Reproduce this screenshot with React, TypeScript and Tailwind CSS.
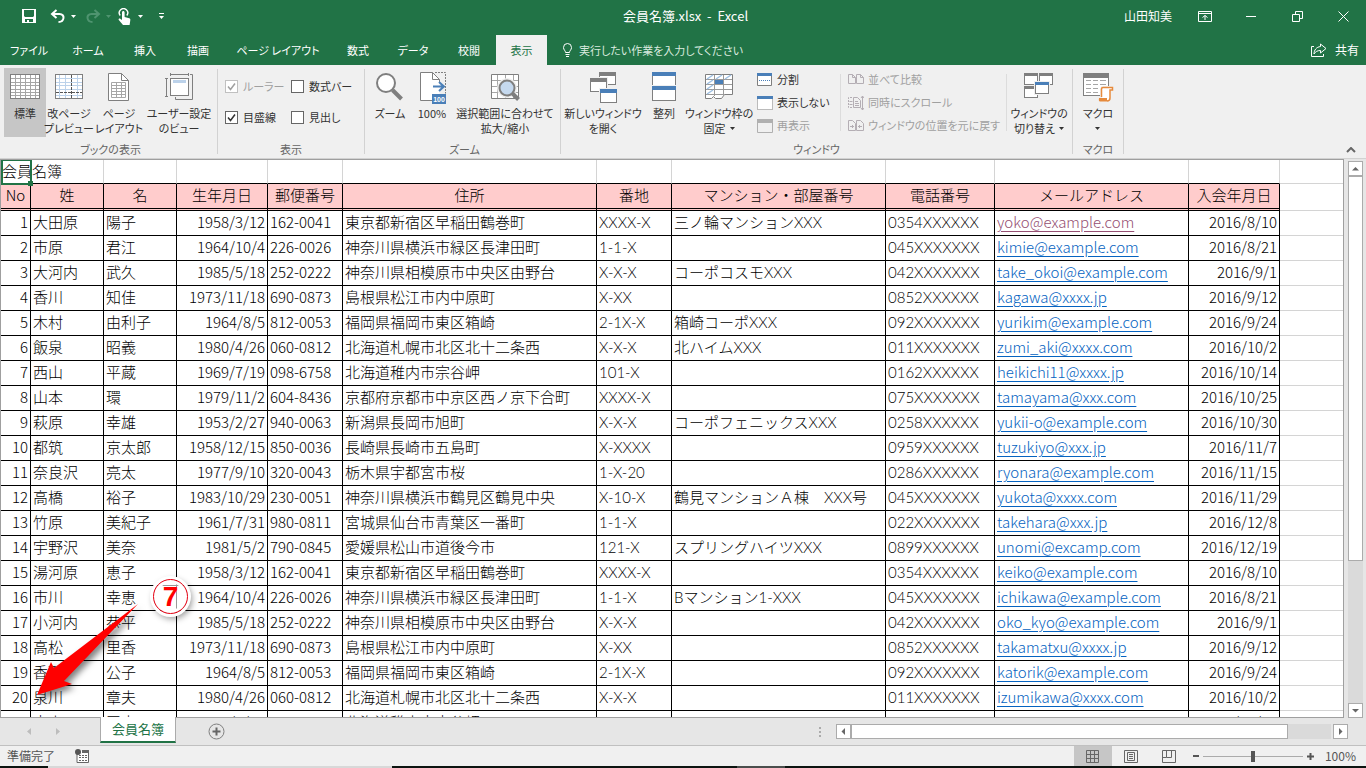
import React, { useState } from 'react';

type Member = [string, string, string, string, string, string, string, string, string, string];

const headers = ['No', '姓', '名', '生年月日', '郵便番号', '住所', '番地', 'マンション・部屋番号', '電話番号', 'メールアドレス', '入会年月日'];

const members: Member[] = [
  ['大田原', '陽子', '1958/3/12', '162-0041', '東京都新宿区早稲田鶴巻町', 'XXXX-X', '三ノ輪マンションXXX', '0354XXXXXX', 'yoko@example.com', '2016/8/10'],
  ['市原', '君江', '1964/10/4', '226-0026', '神奈川県横浜市緑区長津田町', '1-1-X', '', '045XXXXXXX', 'kimie@example.com', '2016/8/21'],
  ['大河内', '武久', '1985/5/18', '252-0222', '神奈川県相模原市中央区由野台', 'X-X-X', 'コーポコスモXXX', '042XXXXXXX', 'take_okoi@example.com', '2016/9/1'],
  ['香川', '知佳', '1973/11/18', '690-0873', '島根県松江市内中原町', 'X-XX', '', '0852XXXXXX', 'kagawa@xxxx.jp', '2016/9/12'],
  ['木村', '由利子', '1964/8/5', '812-0053', '福岡県福岡市東区箱崎', '2-1X-X', '箱崎コーポXXX', '092XXXXXXX', 'yurikim@example.com', '2016/9/24'],
  ['飯泉', '昭義', '1980/4/26', '060-0812', '北海道札幌市北区北十二条西', 'X-X-X', '北ハイムXXX', '011XXXXXXX', 'zumi_aki@xxxx.com', '2016/10/2'],
  ['西山', '平蔵', '1969/7/19', '098-6758', '北海道稚内市宗谷岬', '101-X', '', '0162XXXXXX', 'heikichi11@xxxx.jp', '2016/10/14'],
  ['山本', '環', '1979/11/2', '604-8436', '京都府京都市中京区西ノ京下合町', 'XXXX-X', '', '075XXXXXXX', 'tamayama@xxx.com', '2016/10/25'],
  ['萩原', '幸雄', '1953/2/27', '940-0063', '新潟県長岡市旭町', 'X-X-X', 'コーポフェニックスXXX', '0258XXXXXX', 'yukii-o@example.com', '2016/10/30'],
  ['都筑', '京太郎', '1958/12/15', '850-0036', '長崎県長崎市五島町', 'X-XXXX', '', '0959XXXXXX', 'tuzukiyo@xxx.jp', '2016/11/7'],
  ['奈良沢', '亮太', '1977/9/10', '320-0043', '栃木県宇都宮市桜', '1-X-20', '', '0286XXXXXX', 'ryonara@example.com', '2016/11/15'],
  ['高橋', '裕子', '1983/10/29', '230-0051', '神奈川県横浜市鶴見区鶴見中央', 'X-10-X', '鶴見マンションＡ棟　XXX号', '045XXXXXXX', 'yukota@xxxx.com', '2016/11/29'],
  ['竹原', '美紀子', '1961/7/31', '980-0811', '宮城県仙台市青葉区一番町', '1-1-X', '', '022XXXXXXX', 'takehara@xxx.jp', '2016/12/8'],
  ['宇野沢', '美奈', '1981/5/2', '790-0845', '愛媛県松山市道後今市', '121-X', 'スプリングハイツXXX', '0899XXXXXX', 'unomi@excamp.com', '2016/12/19'],
  ['湯河原', '恵子', '1958/3/12', '162-0041', '東京都新宿区早稲田鶴巻町', 'XXXX-X', '', '0354XXXXXX', 'keiko@example.com', '2016/8/10'],
  ['市川', '幸恵', '1964/10/4', '226-0026', '神奈川県横浜市緑区長津田町', '1-1-X', 'Bマンション1-XXX', '045XXXXXXX', 'ichikawa@example.com', '2016/8/21'],
  ['小河内', '恭平', '1985/5/18', '252-0222', '神奈川県相模原市中央区由野台', 'X-X-X', '', '042XXXXXXX', 'oko_kyo@example.com', '2016/9/1'],
  ['高松', '里香', '1973/11/18', '690-0873', '島根県松江市内中原町', 'X-XX', '', '0852XXXXXX', 'takamatxu@xxxx.jp', '2016/9/12'],
  ['香取', '公子', '1964/8/5', '812-0053', '福岡県福岡市東区箱崎', '2-1X-X', '', '092XXXXXXX', 'katorik@example.com', '2016/9/24'],
  ['泉川', '章夫', '1980/4/26', '060-0812', '北海道札幌市北区北十二条西', 'X-X-X', '', '011XXXXXXX', 'izumikawa@xxxx.com', '2016/10/2'],
  ['東山', '平太', '1969/7/19', '', '北海道稚内市宗谷岬', '', '', '', '', '2016/10/14'],
];

const tabs = [
  { name: 'ファイル', width: 'w-[58px]' },
  { name: 'ホーム', width: 'w-[60px]' },
  { name: '挿入', width: 'w-[54px]' },
  { name: '描画', width: 'w-[52px]' },
  { name: 'ページ レイアウト', width: 'w-[108px]' },
  { name: '数式', width: 'w-[52px]' },
  { name: 'データ', width: 'w-[58px]' },
  { name: '校閲', width: 'w-[54px]' },
  { name: '表示', width: 'w-[51px]' },
];

const GRAY = '#7f7f7f';
const BLUE = '#4a7fb8';

/* ---------- Small glyphs ---------- */

const Caret = ({ className = '' }: { className?: string }) => (
  <svg width="5" height="3" viewBox="0 0 5 3" className={className} aria-hidden="true">
    <path d="M0 0h5L2.5 3z" fill="currentColor" />
  </svg>
);

const Triangle = ({ d }: { d: string }) => (
  <svg width="9" height="9" viewBox="0 0 9 9" aria-hidden="true">
    <path d={d} fill="currentColor" />
  </svg>
);

const SaveIcon = () => (
  <svg width="14" height="14" viewBox="0 0 14 14" aria-hidden="true">
    <path fill="#fff" fillRule="evenodd" d="M0 0h14v14H0zM2 1v6l1 1h8l1-1V1zM3 10v3h2v-2h2v2h4v-3z" />
  </svg>
);

const UndoIcon = () => (
  <svg width="16" height="14" viewBox="0 0 16 14" fill="none" stroke="currentColor" strokeWidth="2" aria-hidden="true">
    <path d="M6.5 1 2 5l4.5 4M2 5h7.5c6 0 5 8-1 8" />
  </svg>
);

const TouchIcon = () => (
  <svg width="13" height="17" viewBox="0 0 13 17" aria-hidden="true">
    <path d="M2.2 7.5a4.2 4.2 0 1 1 6.6 0" fill="none" stroke="#fff" strokeWidth="1.4" />
    <path fill="#fff" d="M4 4.5c0-2 2.6-2 2.6 0V9l4.6 1.2c1 .3 1.3 1 1.1 2L11.6 17H5L.8 12c-.8-1.2.8-2 1.7-1.1L4 12z" />
  </svg>
);

/* ---------- Ribbon icons, 32x32 ---------- */

const Icon32 = ({ children }: { children: React.ReactNode }) => (
  <svg width="32" height="32" viewBox="0 0 32 32" fill="none" className="shrink-0" aria-hidden="true">
    {children}
  </svg>
);

const NormalViewIcon = () => (
  <Icon32>
    <rect x="1.5" y="2.5" width="29" height="24" fill="#fff" stroke={GRAY} />
    <path d="M6.5 3v23M11.5 3v23M16.5 3v23M21.5 3v23M26.5 3v23M2 6.5h28M2 10.5h28M2 13.5h28M2 17.5h28M2 20.5h28M2 23.5h28" stroke="#a6a6a6" />
  </Icon32>
);

const PageBreakIcon = () => (
  <Icon32>
    <rect x="2.5" y="2.5" width="27" height="24" fill="#fff" stroke={GRAY} />
    <path d="M6.5 3v23M12.5 3v23M24.5 3v23M3 6.5h26M3 10.5h26M3 13.5h26M3 17.5h26M3 23.5h26" stroke="#bcd2ea" />
    <path d="M18.5 3v23M3 20.5h26" stroke="#555" strokeDasharray="3 1" />
  </Icon32>
);

const PageLayoutIcon = () => (
  <Icon32>
    <path d="M5.5 1.5h13l7 7v20h-20z" fill="#fff" stroke={GRAY} />
    <path d="M18.5 1.5v7h7" stroke={GRAY} />
    <path d="M8.5 10.5h14v15h-14zM8.5 13.5h14M8.5 16.5h14M8.5 19.5h14M8.5 22.5h14M13.5 10.5v15M18.5 10.5v15" stroke="#a6a6a6" />
  </Icon32>
);

const CustomViewIcon = () => (
  <Icon32>
    <path d="M27 2.5h2.5v25h-17V25" stroke={GRAY} />
    <path d="M7.5 2.5h18M7.5 1v3M25.5 1v3M3.5 6.5v18M2 6.5h3M2 24.5h3" stroke={GRAY} />
    <rect x="7.5" y="6.5" width="18" height="17" fill="#fff" stroke={GRAY} />
    <path d="M10 8h13v3H10z" fill="#bcd2ea" />
  </Icon32>
);

const ZoomIcon = () => (
  <Icon32>
    <circle cx="12" cy="11" r="9" fill="#fff" stroke={GRAY} strokeWidth="2" />
    <path d="m18.5 18 9 9" stroke={GRAY} strokeWidth="4" />
  </Icon32>
);

const Zoom100Icon = () => (
  <Icon32>
    <path d="M4.5.5h12l7 7v21h-19z" fill="#fff" />
    <path d="M16 28.5H4.5V.5h12l7 7v3M16.5.5v7h7" stroke={GRAY} />
    <path d="M19 .5h10.5v21" stroke={GRAY} strokeDasharray="2 1" />
    <path d="M17 14.5h10M23 10l5 4.5-5 4.5" stroke={BLUE} strokeWidth="2" />
    <path d="M16 22h14v10H16z" fill={BLUE} />
    <text x="23" y="30" textAnchor="middle" fontSize="7" fontWeight="700" fill="#fff" fontFamily="Liberation Sans, sans-serif">100</text>
  </Icon32>
);

const ZoomSelectionIcon = () => (
  <Icon32>
    <path d="M2.5 2.5h27v24h-27z" fill="#fff" stroke={GRAY} />
    <path d="M8.5 3v23M16.5 3v23M24.5 3v23M3 8.5h26M3 14.5h26M3 20.5h26" stroke="#a6a6a6" />
    <circle cx="18" cy="16" r="8" fill="#c5d9ef" stroke="#f0f0f0" strokeWidth="4" />
    <circle cx="18" cy="16" r="7.5" fill="#c5d9ef" stroke={GRAY} strokeWidth="2" />
    <path d="m23.5 21.5 6 6" stroke={GRAY} strokeWidth="4" />
  </Icon32>
);

interface WinProps { x: number; y: number; w: number; h: number; bar: number; color?: string }

// Miniature window used by several ribbon icons
const Win = ({ x, y, w, h, bar, color = GRAY }: WinProps) => (
  <g shapeRendering="crispEdges">
    <rect x={x - 1} y={y - 1} width={w + 2} height={h + 2} fill="#f0f0f0" />
    <rect x={x} y={y} width={w} height={h} fill={GRAY} />
    <rect x={x + 1} y={y + bar} width={w - 2} height={h - bar - 1} fill="#fff" />
    <rect x={x} y={y} width={w} height={bar} fill={color} />
  </g>
);

const NewWindowIcon = () => (
  <Icon32>
    <Win x={12} y={0} w={17} h={13} bar={4} />
    <Win x={3} y={6} w={17} h={14} bar={4} />
    <Win x={13} y={17} w={17} h={14} bar={4} color={BLUE} />
  </Icon32>
);

const ArrangeIcon = () => (
  <Icon32>
    <Win x={4} y={0} w={24} h={15} bar={4} color={BLUE} />
    <Win x={4} y={14} w={24} h={15} bar={4} color={BLUE} />
  </Icon32>
);

const FreezeIcon = () => (
  <Icon32>
    <path d="M2.5 2.5h27v20h-8l-3 4h-6l-2-2-2 2h-6z" fill="#fff" stroke={GRAY} />
    <path d="M11.5 3v21M20.5 3v20M3 7.5h26M3 12.5h26M3 17.5h26M3 22.5h18" stroke="#9a9a9a" />
    <path d="m4 7 6-4M13 7l6-4M22 7l6-4M4 12l6-4M4 17l6-4M4 22l6-4" stroke="#9dbfe2" strokeWidth="1.5" />
    <path d="M12 8h8v4h-8z" fill={BLUE} />
  </Icon32>
);

const SwitchWindowIcon = () => (
  <Icon32>
    <Win x={1} y={1} w={14} h={12} bar={3} />
    <Win x={16} y={1} w={14} h={12} bar={3} />
    <Win x={1} y={14} w={14} h={12} bar={3} />
    <Win x={12} y={10} w={14} h={12} bar={3} color={BLUE} />
  </Icon32>
);

const MacroIcon = () => (
  <Icon32>
    <Win x={1} y={1} w={26} h={23} bar={5} />
    <path d="M4 8.5h5M11 8.5h5M18 8.5h6M4 12.5h5M11 12.5h5M18 12.5h6M4 16.5h5M11 16.5h5M4 20.5h5M11 20.5h5" stroke="#a6a6a6" />
    <path d="M20 15h11v4h-2v9c0 2-1 2-3 2h-9v-4h2V17z" fill="#fff" stroke="#f0f0f0" strokeWidth="2" />
    <path d="M19.5 25V17c0-1 .5-1.5 1.5-1.5h9.5V18H28v8c0 2-1 3-3 3" stroke="#e68a3c" strokeWidth="1.5" />
    <path d="M17 26h8v3.5h-7c-1 0-1.5-1-1-3.5z" fill="#e68a3c" />
  </Icon32>
);

/* ---------- Small ribbon icons, 16x14 ---------- */

const SplitIcon = () => (
  <svg width="16" height="14" viewBox="0 0 16 14" aria-hidden="true">
    <path d="M.5.5h14v12H.5z" fill="#fff" stroke={GRAY} />
    <path d="M0 0h15v3H0z" fill={BLUE} />
    <path d="M2 7.5h12" stroke={BLUE} strokeDasharray="1 1" />
  </svg>
);

const HideIcon = () => (
  <svg width="16" height="14" viewBox="0 0 16 14" aria-hidden="true">
    <path d="M.5.5h15v13H.5z" fill="#fff" stroke={GRAY} strokeDasharray="1 1" />
    <path d="M0 0h16v3H0z" fill={BLUE} />
  </svg>
);

const UnhideIcon = () => (
  <svg width="16" height="14" viewBox="0 0 16 14" aria-hidden="true">
    <path d="M.5.5h15v13H.5z" fill="#f0f0f0" stroke="#b0b0b0" />
    <path d="M0 0h16v4H0z" fill="#b0b0b0" />
  </svg>
);

const SideBySideIcon = () => (
  <svg width="16" height="14" viewBox="0 0 16 14" fill="none" stroke="#b4aeb4" aria-hidden="true">
    <path d="M.5 1.5h4l3 3v6h-7zM4.5 1.5v3h3M8.5 1.5h4l3 3v6h-7zM12.5 1.5v3h3" />
  </svg>
);

const SyncScrollIcon = () => (
  <svg width="16" height="16" viewBox="0 0 16 16" fill="none" stroke="#b4aeb4" aria-hidden="true">
    <path d="M4 2.5H.5v10H4" strokeDasharray="2 1" />
    <path d="M5.5 2.5h4l3 3v7h-7zM7 6.5h3M7 8.5h4M7 10.5h4M1.5 6.5h3M1.5 9.5h3M14.5 1v14M13 3l1.5-2L16 3M13 13l1.5 2 1.5-2" />
  </svg>
);

const ResetPosIcon = () => (
  <svg width="16" height="14" viewBox="0 0 16 14" fill="none" stroke="#b4aeb4" aria-hidden="true">
    <path d="M.5 1.5h4l3 3v7h-7zM8.5 1.5h4l3 3v7h-7zM2 7.5h4M4.5 6v3M10 7.5h4M11.5 6v3" />
  </svg>
);

/* ---------- Ribbon parts ---------- */

interface BigButtonProps {
  icon: React.ReactNode;
  lines: string[];
  width: string;
  active?: boolean;
  menu?: boolean;
}

const BigButton = ({ icon, lines, width, active, menu }: BigButtonProps) => (
  <button className={`flex h-[69px] flex-col items-center pt-1 ${width} ${active ? 'bg-[#c6c6c6]' : 'hover:bg-[#dcdcdc]'}`}>
    {icon}
    <span className="mt-[2px] flex flex-col items-center text-[11px] leading-[15px] whitespace-nowrap">
      {lines.map((line, i) => (
        <span key={line} className="flex items-center gap-1">
          {line}
          {menu && lines.length > 1 && i === lines.length - 1 && <Caret />}
        </span>
      ))}
      {menu && lines.length === 1 && <Caret className="mt-[6px]" />}
    </span>
  </button>
);

const SmallButton = ({ icon, label, disabled }: { icon: React.ReactNode; label: string; disabled?: boolean }) => (
  <button disabled={disabled} className="flex h-[23px] items-center gap-1 whitespace-nowrap text-[11px] disabled:text-[#a0a0a0]">
    <span className="flex w-4 justify-center">{icon}</span>
    {label}
  </button>
);

const Group = ({ label, className = '', children }: { label: string; className?: string; children: React.ReactNode }) => (
  <section className={`my-1 flex h-[85px] flex-col border-r border-[#d2d2d2] ${className}`}>
    <div className="-mt-px flex h-[69px] shrink-0">{children}</div>
    <div className="mt-1 shrink-0 text-center text-[11px] leading-[16px] text-[#666]">{label}</div>
  </section>
);

const CheckItem = ({ label, checked, disabled }: { label: string; checked?: boolean; disabled?: boolean }) => (
  <label className={`relative flex items-center gap-[5px] whitespace-nowrap text-[11px] ${disabled ? 'text-[#a0a0a0]' : ''}`}>
    <input
      type="checkbox"
      defaultChecked={checked}
      disabled={disabled}
      className="peer size-[13px] appearance-none border border-[#666] bg-white disabled:border-[#c0c0c0]"
    />
    <svg width="9" height="9" viewBox="0 0 9 9" className="absolute left-[2px] hidden peer-checked:block" aria-hidden="true">
      <path d="m1 4.5 2.5 3L8 1.5" fill="none" stroke="currentColor" strokeWidth="1.5" />
    </svg>
    {label}
  </label>
);

const TitleBar = () => (
  <div className="flex h-8 items-center text-[12px]">
    <div className="flex flex-1 items-center pl-[22px]">
      <button aria-label="上書き保存"><SaveIcon /></button>
      <button aria-label="元に戻す" className="ml-[14px] flex items-center gap-[5px]"><UndoIcon /><Caret /></button>
      <button aria-label="やり直し" disabled className="ml-[9px] flex items-center gap-[5px] text-[#4f9470]">
        <span className="-scale-x-100"><UndoIcon /></span><Caret />
      </button>
      <button aria-label="タッチ/マウス モードの切り替え" className="ml-[7px] flex items-center gap-[7px]"><TouchIcon /><Caret /></button>
      <button aria-label="クイック アクセス ツール バーのユーザー設定" className="ml-4 flex flex-col items-center gap-[2px]">
        <span className="h-px w-[5px] bg-white" /><Caret />
      </button>
    </div>
    <h1 className="text-[13px] leading-[18px] whitespace-pre">会員名簿.xlsx  -  Excel</h1>
    <div className="flex flex-1 items-center justify-end pr-[17px]">
      <span>山田知美</span>
      <button aria-label="リボンの表示オプション" className="ml-[26px]">
        <svg width="14" height="11" viewBox="0 0 14 11" fill="none" stroke="#fff" aria-hidden="true">
          <path d="M.5.5h13v10H.5zM.5 2.5h13M7 9V4.5M4.5 6.5 7 4.5l2.5 2" />
        </svg>
      </button>
      <button aria-label="最小化" className="ml-[34px]">
        <svg width="11" height="11" viewBox="0 0 11 11" aria-hidden="true"><path d="M0 5.5h10" stroke="#fff" /></svg>
      </button>
      <button aria-label="元に戻す (縮小)" className="ml-[35px]">
        <svg width="11" height="11" viewBox="0 0 11 11" fill="none" stroke="#fff" aria-hidden="true">
          <path d="M.5 3.5h7v7h-7zM3.5 3V.5h7v7H8" />
        </svg>
      </button>
      <button aria-label="閉じる" className="ml-[35px]">
        <svg width="11" height="11" viewBox="0 0 11 11" stroke="#fff" aria-hidden="true"><path d="m.5.5 10 10M10.5.5l-10 10" /></svg>
      </button>
    </div>
  </div>
);

const TabBar = () => (
  <nav className="flex h-[33px] items-end text-[11px] whitespace-nowrap">
    {tabs.map(tab => (
      <button key={tab.name} className={`h-[30px] ${tab.width} ${tab.name === '表示' ? 'bg-[#f0f0f0] text-[#217346]' : ''}`}>
        {tab.name}
      </button>
    ))}
    <button className="ml-4 flex h-[30px] items-center gap-[7px] text-[#d9eadf]">
      <svg width="9" height="14" viewBox="0 0 9 14" fill="none" stroke="#fff" aria-hidden="true">
        <path d="M2.5 9.5C2.5 7.5.5 7 .5 4.5a4 4 0 0 1 8 0c0 2.5-2 3-2 5zM2.5 11.5h4M3 13.5h3" />
      </svg>
      実行したい作業を入力してください
    </button>
    <button className="mr-[7px] ml-auto flex h-[30px] items-center gap-2 text-[12px]">
      <svg width="16" height="14" viewBox="0 0 16 14" fill="none" stroke="#fff" aria-hidden="true">
        <path d="M3 3.5H.5v10h12V11M9.5 1l5.5 4.5L9.5 10V7.5C6.5 7.5 4.5 8.5 3 11c0-4 2.5-7 6.5-7.5z" />
      </svg>
      共有
    </button>
  </nav>
);

const Ribbon = () => (
  <div className="flex h-[94px] shrink-0 border-b border-[#d2d2d2] bg-[#f0f0f0] text-[#333]">
    <Group label="ブックの表示" className="w-[218px] pl-1">
      <BigButton icon={<NormalViewIcon />} lines={['標準']} width="w-[42px]" active />
      <BigButton icon={<PageBreakIcon />} lines={['改ページ', 'プレビュー']} width="w-[46px]" />
      <BigButton icon={<PageLayoutIcon />} lines={['ページ', 'レイアウト']} width="w-[54px]" />
      <BigButton icon={<CustomViewIcon />} lines={['ユーザー設定', 'のビュー']} width="w-[66px]" />
    </Group>
    <Group label="表示" className="w-[147px]">
      <div className="grid grid-cols-[66px_auto] grid-rows-[31px_31px] pt-[3px] pl-[7px]">
        <CheckItem label="ルーラー" checked disabled />
        <CheckItem label="数式バー" />
        <CheckItem label="目盛線" checked />
        <CheckItem label="見出し" />
      </div>
    </Group>
    <Group label="ズーム" className="w-[196px] pl-1">
      <BigButton icon={<ZoomIcon />} lines={['ズーム']} width="w-[42px]" />
      <BigButton icon={<Zoom100Icon />} lines={['100%']} width="w-[42px]" />
      <BigButton icon={<ZoomSelectionIcon />} lines={['選択範囲に合わせて', '拡大/縮小']} width="w-[104px]" />
    </Group>
    <Group label="ウィンドウ" className="w-[512px]">
      <BigButton icon={<NewWindowIcon />} lines={['新しいウィンドウ', 'を開く']} width="w-[84px]" />
      <BigButton icon={<ArrangeIcon />} lines={['整列']} width="w-[38px]" />
      <BigButton icon={<FreezeIcon />} lines={['ウィンドウ枠の', '固定']} width="w-[72px]" menu />
      <div className="w-[85px] pl-[2px]">
        <SmallButton icon={<SplitIcon />} label="分割" />
        <SmallButton icon={<HideIcon />} label="表示しない" />
        <SmallButton icon={<UnhideIcon />} label="再表示" disabled />
      </div>
      <div className="my-[6px] w-px bg-[#dcdcdc]" />
      <div className="w-[165px] pl-[7px]">
        <SmallButton icon={<SideBySideIcon />} label="並べて比較" disabled />
        <SmallButton icon={<SyncScrollIcon />} label="同時にスクロール" disabled />
        <SmallButton icon={<ResetPosIcon />} label="ウィンドウの位置を元に戻す" disabled />
      </div>
      <div className="my-[6px] w-px bg-[#dcdcdc]" />
      <BigButton icon={<SwitchWindowIcon />} lines={['ウィンドウの', '切り替え']} width="w-[64px]" menu />
    </Group>
    <Group label="マクロ" className="w-[51px]">
      <BigButton icon={<MacroIcon />} lines={['マクロ']} width="w-[50px]" menu />
    </Group>
    <button aria-label="リボンを折りたたむ" className="mt-auto mr-[10px] mb-[5px] ml-auto text-[#666]">
      <svg width="10" height="6" viewBox="0 0 10 6" fill="none" aria-hidden="true"><path d="m1 5 4-4 4 4" stroke="currentColor" strokeWidth="2" /></svg>
    </button>
  </div>
);

/* ---------- Worksheet ---------- */

const cell = 'h-[25px] border-r border-b border-black px-[2px] py-0 align-top font-light';
const wideCell = `${cell} font-['Lato','Noto_Sans_CJK_JP',sans-serif]`;
const blank = 'border-b border-[#d4d4d4]';

const Sheet = () => (
  <table className="w-full table-fixed border-separate border-spacing-0 text-[15px] leading-[22px] whitespace-nowrap text-black">
    <colgroup>
      <col className="w-[30px]" />
      <col className="w-[73px]" />
      <col className="w-[73px]" />
      <col className="w-[91px]" />
      <col className="w-[75px]" />
      <col className="w-[254px]" />
      <col className="w-[75px]" />
      <col className="w-[214px]" />
      <col className="w-[109px]" />
      <col className="w-[194px]" />
      <col className="w-[91px]" />
      <col />
    </colgroup>
    <thead>
      <tr>
        <td className="relative h-6 border-b border-black p-0 pl-px align-top font-light">
          会員名簿
          <span className="absolute -top-px left-0 h-[26px] w-[31px] border-2 border-[#217346]">
            <span className="absolute -right-[3px] -bottom-[3px] size-[5px] bg-[#217346]" />
          </span>
        </td>
        {headers.slice(1).map(h => (
          <td key={h} className="border-r border-b border-r-[#d4d4d4] border-b-black p-0" />
        ))}
        <td className={blank} />
      </tr>
      <tr>
        {headers.map(h => (
          <th key={h} scope="col" className="h-[27px] border-r border-b-3 border-black bg-[#ffcccc] p-0 text-center align-top font-light [border-bottom-style:double]">
            {h}
          </th>
        ))}
        <td className={blank} />
      </tr>
    </thead>
    <tbody>
      {members.map(([last, first, birth, zip, address, block, building, phone, mail, joined], i) => (
        <tr key={last}>
          <td className={`${cell} text-right`}>{i < 20 && i + 1}</td>
          <td className={cell}>{last}</td>
          <td className={cell}>{first}</td>
          <td className={`${cell} text-right`}>{birth}</td>
          <td className={cell}>{zip}</td>
          <td className={cell}>{address}</td>
          <td className={wideCell}>{block}</td>
          <td className={wideCell}>{building}</td>
          <td className={wideCell}>{phone}</td>
          <td className={cell}>
            <a href={`mailto:${mail}`} className={`underline underline-offset-3 ${i === 0 ? 'text-[#954f72]' : 'text-[#0563c1]'}`}>{mail}</a>
          </td>
          <td className={`${cell} text-right`}>{joined}</td>
          <td className={blank} />
        </tr>
      ))}
    </tbody>
  </table>
);

const Callout = () => (
  <div className="pointer-events-none absolute top-[416px] left-[33px] h-[130px] w-[160px]">
    <svg width="160" height="130" viewBox="0 0 160 130" className="absolute inset-0 drop-shadow-[3px_4px_3px_rgba(0,0,0,0.5)]" aria-hidden="true">
      <path d="M104 28 20 92l-3-6L3 119l35-11-8-3z" fill="#ff0000" />
    </svg>
    <div className="absolute top-[3px] left-[119px] flex size-[35px] items-center justify-center rounded-full border border-[#e60012] bg-white/60 font-['Liberation_Sans',sans-serif] text-[28px] font-bold text-[#ff0000] shadow-[0_0_0_3px_#fff,inset_0_0_0_3px_#fff,2px_3px_6px_2px_rgba(0,0,0,0.4)]">
      7
    </div>
  </div>
);

const scrollButton = 'flex size-[15px] shrink-0 items-center justify-center border border-[#ababab] bg-white text-[#666]';

const VerticalScroll = () => (
  <div className="mr-[3px] ml-1 flex w-[15px] flex-col pt-[2px]">
    <button aria-label="上へスクロール" className={scrollButton}><Triangle d="M1 6.5 4.5 3 8 6.5z" /></button>
    <div className="flex-1 bg-[#dadada]">
      <div className="h-[73%] border border-[#ababab] bg-white" />
    </div>
    <button aria-label="下へスクロール" className={scrollButton}><Triangle d="M1 3l3.5 3.5L8 3z" /></button>
  </div>
);

const SheetTabs = () => (
  <div className="flex h-[27px] shrink-0 items-center bg-[#e6e6e6] text-[13px]">
    <div className="flex w-[100px] gap-[19px] pl-[25px] text-[#bdbdbd]">
      <button aria-label="前のシート"><Triangle d="M6 1v7L2 4.5z" /></button>
      <button aria-label="次のシート"><Triangle d="M3 1v7l4-3.5z" /></button>
    </div>
    <button className="relative -mt-px flex h-[26px] w-[76px] items-center justify-center self-start border-x border-b-2 border-x-[#ababab] border-b-[#217346] bg-white text-[#217346]">
      会員名簿
    </button>
    <button aria-label="新しいシート" className="ml-8">
      <svg width="17" height="17" viewBox="0 0 17 17" fill="none" aria-hidden="true">
        <circle cx="8.5" cy="8.5" r="7.5" stroke="#7f7f7f" />
        <path d="M8.5 4.5v8M4.5 8.5h8" stroke="#666" strokeWidth="2" />
      </svg>
    </button>
    <div className="ml-auto flex flex-col gap-[2px]">
      <span className="size-[2px] bg-[#ababab]" />
      <span className="size-[2px] bg-[#ababab]" />
      <span className="size-[2px] bg-[#ababab]" />
    </div>
    <div className="mr-[18px] ml-[15px] flex w-[512px]">
      <button aria-label="左へスクロール" className={scrollButton}><Triangle d="M6 1v7L2.5 4.5z" /></button>
      <div className="mr-[2px] flex-1 bg-[#dadada]">
        <div className="h-[15px] w-[91%] border border-[#ababab] bg-white" />
      </div>
      <button aria-label="右へスクロール" className={scrollButton}><Triangle d="M3 1v7l3.5-3.5z" /></button>
    </div>
  </div>
);

const viewButton = 'flex h-full w-[38px] items-center justify-center';

const StatusBar = ({ zoom, onZoom }: { zoom: number; onZoom: (v: number) => void }) => (
  <footer className="flex h-[21px] shrink-0 items-center border-t border-[#c0c0c0] bg-[#f0f0f0] pl-[7px] text-[12px] text-[#555]">
    <span>準備完了</span>
    <svg width="14" height="14" viewBox="0 0 14 14" className="ml-5" aria-hidden="true">
      <path d="M2 5v8.5h11.5V1.5H7" fill="#fff" stroke="#666" />
      <path d="M7 1h7v3H7z" fill="#666" />
      <path d="M4 6.5h2M7 6.5h2M10 6.5h2M4 8.5h2M7 8.5h2M10 8.5h2M4 11.5h2M7 11.5h2M10 11.5h2" stroke="#666" />
      <circle cx="3" cy="3" r="3" fill="#555" />
    </svg>
    <div className="ml-auto flex h-full">
      <button aria-label="標準" className={`${viewButton} bg-[#c6c6c6]`}>
        <svg width="13" height="13" viewBox="0 0 13 13" fill="none" stroke="#666" aria-hidden="true">
          <path d="M.5.5h12v12H.5zM4.5.5v12M8.5.5v12M.5 4.5h12M.5 8.5h12" />
        </svg>
      </button>
      <button aria-label="ページ レイアウト" className={viewButton}>
        <svg width="14" height="13" viewBox="0 0 14 13" fill="none" stroke="#666" aria-hidden="true">
          <path d="M.5.5h13v12H.5zM3.5 2.5h7v8h-7zM5 4.5h4M5 6.5h4M5 8.5h4" />
        </svg>
      </button>
      <button aria-label="改ページ プレビュー" className={viewButton}>
        <svg width="14" height="13" viewBox="0 0 14 13" fill="none" stroke="#666" aria-hidden="true">
          <path d="M.5.5h13v12H.5zM4.5.5v7h-4M4.5 7.5h5v-7" />
        </svg>
      </button>
    </div>
    <button aria-label="縮小" className="ml-[5px]"><span className="block h-[2px] w-[6px] bg-[#555]" /></button>
    <input
      type="range"
      min={0}
      max={200}
      value={zoom}
      onChange={e => onZoom(Number(e.target.value))}
      aria-label="ズーム"
      className="mx-1 h-3 w-[100px] appearance-none bg-[linear-gradient(#ababab,#ababab)] bg-[length:100%_1px] bg-center bg-no-repeat [&::-webkit-slider-thumb]:h-[11px] [&::-webkit-slider-thumb]:w-1 [&::-webkit-slider-thumb]:appearance-none [&::-webkit-slider-thumb]:bg-[#555]"
    />
    <button aria-label="拡大">
      <svg width="7" height="7" viewBox="0 0 7 7" aria-hidden="true"><path d="M3.5 0v7M0 3.5h7" stroke="#555" strokeWidth="2" /></svg>
    </button>
    <span className="mr-[10px] ml-[11px]">{zoom}%</span>
  </footer>
);

export default function App() {
  const [zoom, setZoom] = useState(100);

  return (
    <div className="flex h-screen flex-col overflow-hidden bg-[#e6e6e6] font-['Noto_Sans_CJK_JP',sans-serif]">
      <div className="flex min-h-0 flex-1 flex-col [font-feature-settings:'palt']">
        <header className="shrink-0 bg-[#217346] text-white">
          <TitleBar />
          <TabBar />
        </header>
        <Ribbon />
        <main className="flex min-h-0 flex-1 [font-feature-settings:normal]">
          <div className="relative min-w-0 flex-1 overflow-hidden border border-[#9f9f9f] bg-white">
            <Sheet />
            <Callout />
          </div>
          <VerticalScroll />
        </main>
        <SheetTabs />
        <StatusBar zoom={zoom} onZoom={setZoom} />
      </div>
      <div className="flex h-[2px] shrink-0 bg-[#0c1410]">
        <div className="ml-12 w-[344px] bg-[#d8d8d8]" />
        <div className="ml-[345px] w-12 bg-[#4a4e4c]" />
      </div>
    </div>
  );
}
